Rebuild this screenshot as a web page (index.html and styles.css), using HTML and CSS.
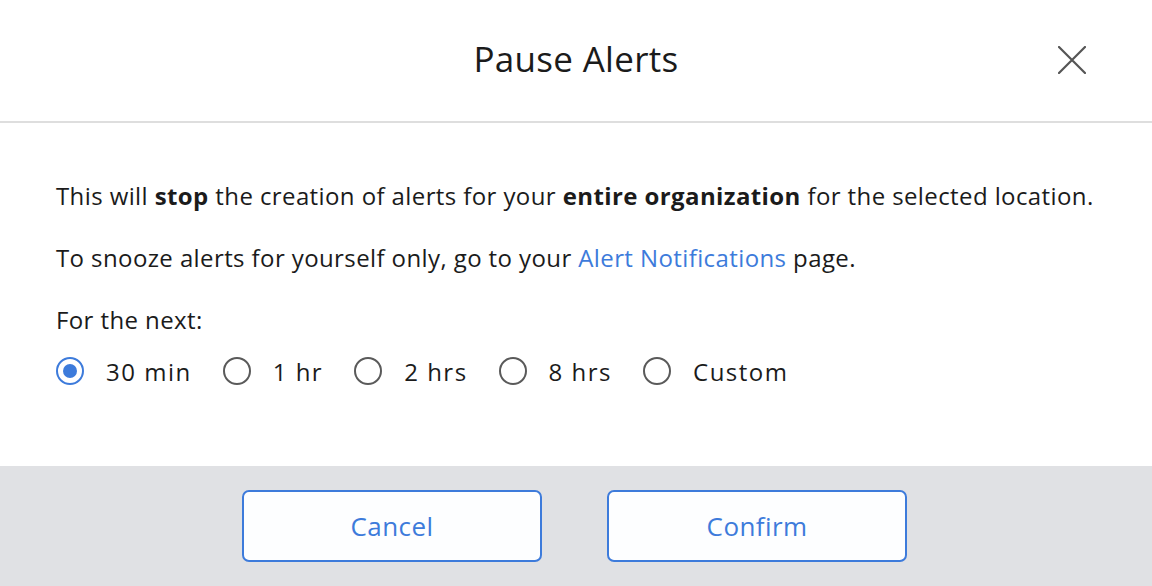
FILE: index.html
```html
<!DOCTYPE html>
<html lang="en">
<head>
    <meta charset="UTF-8">
    <meta name="viewport" content="width=device-width, initial-scale=1.0">
    <title>Pause Alerts</title>
    <link rel="stylesheet" href="styles.css">
</head>
<body>

    <div class="modal">
        <div class="modal-header">
            <h1>Pause Alerts</h1>
            <button class="close" aria-label="Close">
                <svg width="28" height="28" viewBox="0 0 28 28">
                    <path d="M1 1 L27 27 M27 1 L1 27" stroke="#555" stroke-width="2.2" stroke-linecap="round" fill="none"/>
                </svg>
            </button>
        </div>

        <div class="modal-body">
            <p>This will <strong>stop</strong> the creation of alerts for your <strong>entire organization</strong> for the selected location.</p>
            <p>To snooze alerts for yourself only, go to your <a href="#">Alert Notifications</a> page.</p>
            <p class="label">For the next:</p>

            <div class="options">
                <label class="option"><span class="radio checked"></span>30 min</label>
                <label class="option"><span class="radio"></span>1 hr</label>
                <label class="option"><span class="radio"></span>2 hrs</label>
                <label class="option"><span class="radio"></span>8 hrs</label>
                <label class="option"><span class="radio"></span>Custom</label>
            </div>
        </div>

        <div class="modal-footer">
            <button class="button">Cancel</button>
            <button class="button">Confirm</button>
        </div>
    </div>

</body>
</html>
```

FILE: styles.css
```css
body {
    font-family: 'Open Sans', 'Noto Sans', sans-serif;
    background-color: #fff;
    color: #1b1b1b;
    margin: 0;
    padding: 0;
}

.modal {
    display: flex;
    flex-direction: column;
    height: 586px;
}

.modal-header {
    height: 121px;
    border-bottom: 2px solid #dedede;
    display: flex;
    justify-content: center;
    align-items: center;
    position: relative;
}

.modal-header h1 {
    margin: 0 0 4px;
    font-size: 35px;
    font-weight: 400;
    letter-spacing: 0.3px;
    color: #1b1b1b;
}

.close {
    position: absolute;
    right: 66px;
    top: 46px;
    background: none;
    border: none;
    padding: 0;
    width: 28px;
    height: 28px;
    cursor: pointer;
}

.modal-body {
    flex: 1;
    padding: 58px 56px 0;
}

.modal-body p {
    margin: 0 0 32px;
    font-size: 24px;
    line-height: 30px;
    letter-spacing: 0.4px;
}

.modal-body p.label {
    margin-bottom: 22px;
}

.modal-body strong {
    font-weight: 700;
}

.modal-body a {
    color: #3d7bdb;
    text-decoration: none;
}

.options {
    display: flex;
    align-items: center;
    gap: 31px;
    height: 30px;
    margin-top: -1px;
}

.option {
    display: flex;
    align-items: center;
    gap: 22px;
    font-size: 24px;
    letter-spacing: 1.5px;
    cursor: pointer;
}

.radio {
    width: 28px;
    height: 28px;
    box-sizing: border-box;
    border: 2.5px solid #5a5a5a;
    border-radius: 50%;
    display: flex;
    justify-content: center;
    align-items: center;
}

.radio.checked {
    border-color: #3d7bdb;
}

.radio.checked::after {
    content: '';
    width: 14px;
    height: 14px;
    border-radius: 50%;
    background-color: #3d7bdb;
}

.modal-footer {
    height: 120px;
    background-color: #e0e1e4;
    display: flex;
    justify-content: center;
    align-items: center;
    gap: 65px;
    padding-right: 3px;
}

.button {
    width: 300px;
    height: 72px;
    background-color: #fdfeff;
    border: 2px solid #3d7bdb;
    border-radius: 7px;
    color: #3d7bdb;
    font-family: inherit;
    font-size: 26px;
    letter-spacing: 0.4px;
    cursor: pointer;
}
```
